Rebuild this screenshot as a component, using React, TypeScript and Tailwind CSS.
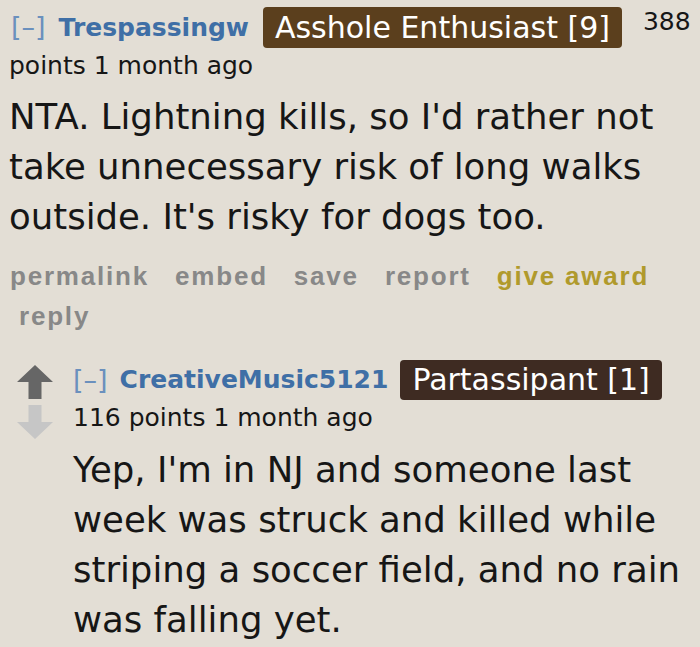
import React from "react";

function Arrow({ up, color }: { up: boolean; color: string }) {
  return (
    <svg width="36" height="34" viewBox="0 0 36 34">
      {up ? (
        <path d="M18 0 L36 17 L24.5 17 L24.5 34 L11.5 34 L11.5 17 L0 17 Z" fill={color} />
      ) : (
        <path d="M11.5 0 L24.5 0 L24.5 17 L36 17 L18 34 L0 17 L11.5 17 Z" fill={color} />
      )}
    </svg>
  );
}

export default function App() {
  const sans = { fontFamily: '"DejaVu Sans", Verdana, sans-serif' };
  return (
    <div
      className="w-[700px] h-[647px] overflow-hidden bg-[#e3ded5] text-[#161616]"
      style={sans}
    >
      {/* Comment 1 */}
      <div className="pl-[9px] pt-[7px]">
        <div className="flex items-center h-[41px] whitespace-nowrap">
          <span className="text-[27px] text-[#6b90bd] ml-[2px]">[–]</span>
          <span className="text-[25px] font-bold text-[#3f6fa6] ml-[13px]">Trespassingw</span>
          <span className="ml-[14px] h-[41px] px-[12px] rounded-[4px] bg-[#5b3f1d] text-white text-[30px] leading-[41px]">
            Asshole Enthusiast [9]
          </span>
          <span className="ml-[21px] text-[25px] self-start leading-[36px] -mt-[3px]">388</span>
        </div>
        <div className="text-[25px] leading-[36px] whitespace-nowrap">points 1 month ago</div>
        <div className="mt-[8px] text-[35.5px] leading-[50px] whitespace-nowrap">
          <div>NTA. Lightning kills, so I'd rather not</div>
          <div>take unnecessary risk of long walks</div>
          <div>outside. It's risky for dogs too.</div>
        </div>
        <div
          className="mt-[14px] text-[26px] font-bold leading-[40px] text-[#888888] tracking-[1.8px]"
          style={{ fontFamily: '"Liberation Sans", Arial, sans-serif' }}
        >
          <div className="flex gap-[26px] pl-[1px] whitespace-nowrap">
            <span>permalink</span>
            <span>embed</span>
            <span>save</span>
            <span>report</span>
            <span className="text-[#b09a2c]">give award</span>
          </div>
          <div className="pl-[10px]">reply</div>
        </div>
      </div>

      {/* Comment 2 */}
      <div className="flex mt-[24px]">
        <div className="w-[73px] pl-[17px] flex flex-col gap-[6px] pt-[5px] shrink-0">
          <Arrow up color="#666666" />
          <Arrow up={false} color="#c6c6c6" />
        </div>
        <div>
          <div className="flex items-center h-[40px] whitespace-nowrap">
            <span className="text-[27px] text-[#6b90bd]">[–]</span>
            <span className="text-[25px] font-bold text-[#3f6fa6] ml-[12px]">CreativeMusic5121</span>
            <span className="ml-[12px] h-[40px] px-[12px] rounded-[4px] bg-[#3e2b22] text-white text-[30px] leading-[40px]">
              Partassipant [1]
            </span>
          </div>
          <div className="text-[25px] leading-[36px] whitespace-nowrap">116 points 1 month ago</div>
          <div className="mt-[9px] text-[35.5px] leading-[50px] whitespace-nowrap">
            <div>Yep, I'm in NJ and someone last</div>
            <div>week was struck and killed while</div>
            <div>striping a soccer field, and no rain</div>
            <div>was falling yet.</div>
          </div>
        </div>
      </div>
    </div>
  );
}
